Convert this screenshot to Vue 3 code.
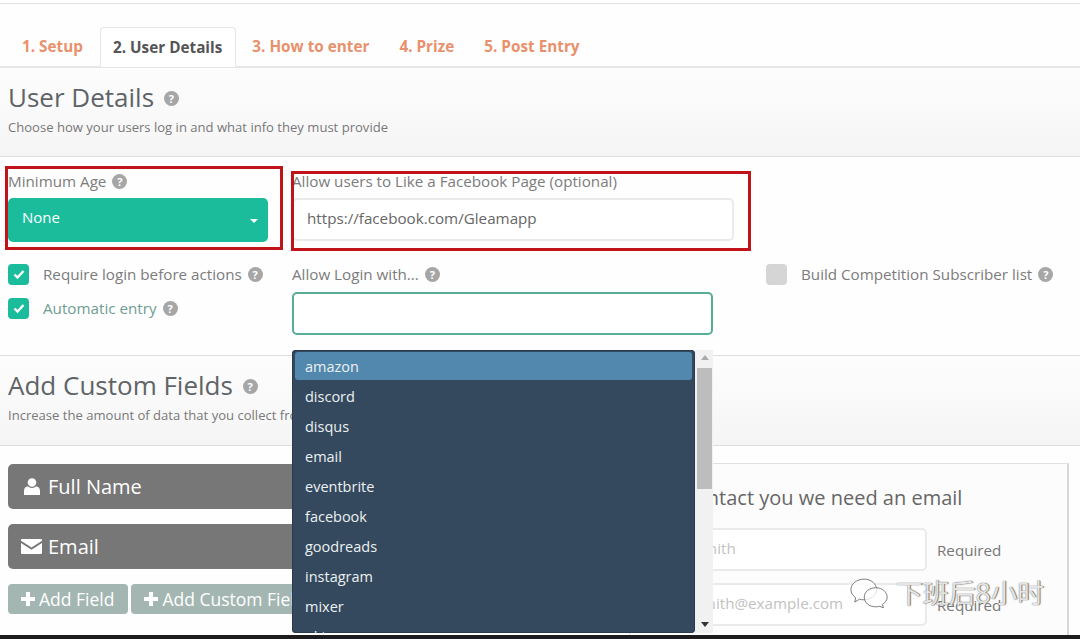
<script setup>
const tabs = [
  { label: '1. Setup', active: false },
  { label: '2. User Details', active: true },
  { label: '3. How to enter', active: false },
  { label: '4. Prize', active: false },
  { label: '5. Post Entry', active: false },
]

const logins = ['amazon', 'discord', 'disqus', 'email', 'eventbrite', 'facebook', 'goodreads', 'instagram', 'mixer', 'okta']
</script>

<template>
  <div class="page">
    <div class="top-line"></div>

    <ul class="tabs">
      <li v-for="tab in tabs" :key="tab.label" class="tab" :class="{ active: tab.active }">{{ tab.label }}</li>
    </ul>

    <header class="band band-first">
      <h2>User Details <span class="help help-big">?</span></h2>
      <p>Choose how your users log in and what info they must provide</p>
    </header>

    <section class="form">
      <div class="col col-age">
        <label class="label">Minimum Age <span class="help">?</span></label>
        <div class="select">
          <span>None</span>
          <i class="caret"></i>
        </div>
        <div class="check first-check">
          <span class="box on">
            <svg viewBox="0 0 20 20" width="20" height="20"><path d="M5.5 10.5l3 3 6-6.5" fill="none" stroke="#fff" stroke-width="2.4" /></svg>
          </span>
          Require login before actions <span class="help">?</span>
        </div>
        <div class="check">
          <span class="box on">
            <svg viewBox="0 0 20 20" width="20" height="20"><path d="M5.5 10.5l3 3 6-6.5" fill="none" stroke="#fff" stroke-width="2.4" /></svg>
          </span>
          <span class="teal-text">Automatic entry</span> <span class="help">?</span>
        </div>
      </div>

      <div class="col col-login">
        <label class="label">Allow users to Like a Facebook Page (optional)</label>
        <div class="input fb">https://facebook.com/Gleamapp</div>
        <label class="label login-label">Allow Login with... <span class="help">?</span></label>
        <div class="input focus"></div>
      </div>

      <div class="col col-list">
        <div class="check">
          <span class="box"></span>
          Build Competition Subscriber list <span class="help">?</span>
        </div>
      </div>
    </section>

    <header class="band band-second">
      <h2>Add Custom Fields <span class="help help-big">?</span></h2>
      <p>Increase the amount of data that you collect from your users</p>
    </header>

    <section class="fields">
      <div class="fields-left">
        <div class="field-bar">
          <span class="bar-icon">
            <svg viewBox="0 0 16 17" width="16" height="17">
              <circle cx="8" cy="4.500" r="4.300" fill="#fff" />
              <path d="M0 17v-4c0-2.800 1.600-4.500 3.800-4.500 1.100.9 2.600 1.400 4.200 1.400s3.100-.5 4.200-1.400c2.200 0 3.800 1.700 3.800 4.500v4z" fill="#fff" />
            </svg>
          </span>
          Full Name
        </div>
        <div class="field-bar">
          <span class="bar-icon">
            <svg viewBox="0 0 21 15" width="21" height="15">
              <path d="M1 0h19a1 1 0 0 1 1 1v.8L10.500 8.500 0 1.800V1a1 1 0 0 1 1-1z" fill="#fff" />
              <path d="M0 4l10.500 6.700L21 4v10a1 1 0 0 1-1 1H1a1 1 0 0 1-1-1z" fill="#fff" />
            </svg>
          </span>
          Email
        </div>
        <div class="add-row">
          <button class="add">
            <svg viewBox="0 0 14 14" width="14" height="14"><path d="M5 0h4v5h5v4H9v5H5V9H0V5h5z" fill="#fff" /></svg>
            Add Field
          </button>
          <button class="add">
            <svg viewBox="0 0 14 14" width="14" height="14"><path d="M5 0h4v5h5v4H9v5H5V9H0V5h5z" fill="#fff" /></svg>
            Add Custom Field
          </button>
        </div>
      </div>

      <div class="card">
        <h3>To contact you we need an email</h3>
        <div class="card-row">
          <div class="card-input">John Smith</div>
          <span>Required</span>
        </div>
        <div class="card-row">
          <div class="card-input">john.smith@example.com</div>
          <span>Required</span>
        </div>
      </div>
    </section>

    <div class="bottom-bar"></div>

    <!-- overlays -->
    <div class="red red-age"></div>
    <div class="red red-fb"></div>

    <div class="dropdown">
      <ul class="options">
        <li v-for="(name, i) in logins" :key="name" :class="{ hover: i === 0 }">{{ name }}</li>
      </ul>
      <div class="scrollbar">
        <i class="arrow up"></i>
        <div class="thumb"></div>
        <i class="arrow down"></i>
      </div>
    </div>

    <div class="watermark">
      <svg viewBox="0 0 44 32" width="42" height="31">
        <g fill="rgba(255,255,255,.75)" stroke="#777" stroke-width="1">
          <path d="M16 2C8 2 2 7 2 13c0 3.500 2 6.500 5 8.500L6 26l5-3c1.500.4 3 .6 4.500.6C22 23.600 29 19 29 13 29 7 23 2 16 2z" />
          <path d="M28 11c-7 0-12 4.500-12 10s5 10 12 10c1.500 0 2.800-.2 4-.6l4 1.600-1-3.500c3-2 5-4.500 5-7.500 0-5.500-5-10-12-10z" />
        </g>
      </svg>
      <span class="wm-text">下班后8小时</span>
    </div>
  </div>
</template>

<style>
html,
body {
  margin: 0;
  background: #fff;
  overflow: hidden;
}
</style>

<style scoped>
.page {
  position: relative;
  width: 1080px;
  height: 639px;
  overflow: hidden;
  background: #fefefe;
  font-family: "Open Sans", "Noto Sans CJK SC", sans-serif;
  color: #7c7c7c;
}

.top-line {
  height: 3px;
  border-bottom: 1px solid #e2e2e2;
}

.tabs {
  display: flex;
  height: 39px;
  margin: 0;
  padding: 23px 0 0 8px;
  list-style: none;
  border-bottom: 2px solid #e6e6e6;
}

.tab {
  padding: 0 14px;
  margin-right: 2px;
  font-size: 15.3px;
  font-weight: 700;
  line-height: 39px;
  color: #e8916c;
  white-space: nowrap;
}

.tab.active {
  height: 40px;
  margin-left: 1px;
  padding: 0 13px 0 12px;
  color: #555;
  background: #fff;
  border: 1px solid #e6e6e6;
  border-bottom: 0;
  border-radius: 4px 4px 0 0;
  box-sizing: border-box;
}

.band {
  box-sizing: border-box;
  padding: 12px 8px 0;
  background: linear-gradient(#fdfdfd, #f5f5f5);
  border-bottom: 1px solid #dedede;
}

.band-first {
  height: 89px;
}

.band-second {
  height: 90px;
}

.band h2 {
  margin: 0;
  font-size: 26px;
  font-weight: 400;
  line-height: 34px;
  color: #5f6468;
}

.band p {
  margin: 4px 0 0;
  font-size: 13.07px;
  line-height: 18px;
  color: #787878;
}

.help {
  display: inline-block;
  width: 15px;
  height: 15px;
  margin-left: 2px;
  border-radius: 50%;
  background: #a6a6a6;
  color: #fff;
  font-size: 11px;
  font-weight: 700;
  line-height: 15px;
  text-align: center;
  vertical-align: 1px;
}

.help-big {
  vertical-align: 4px;
  margin-left: 3px;
}

.form {
  display: flex;
  height: 199px;
  box-sizing: border-box;
  padding: 15px 0 0 8px;
  border-bottom: 1px solid #dedede;
}

.col {
  font-size: 15.2px;
}

.col-age {
  width: 284px;
}

.col-login {
  width: 474px;
}

.col-list {
  padding-top: 91px;
}

.label {
  display: block;
  height: 19px;
  line-height: 19px;
  white-space: nowrap;
}

.select {
  display: flex;
  align-items: center;
  justify-content: space-between;
  box-sizing: border-box;
  width: 260px;
  height: 44px;
  margin-top: 7px;
  padding: 0 10px 6px 14px;
  border-radius: 5px;
  background: #1abc9c;
  color: #fff;
  font-size: 15px;
}

.caret {
  width: 0;
  height: 0;
  margin-top: 7px;
  border: 4px solid transparent;
  border-top: 4px solid #fff;
  border-bottom: 0;
}

.check {
  display: flex;
  align-items: center;
  gap: 4px;
  height: 22px;
  margin-bottom: 12px;
  white-space: nowrap;
}

.first-check {
  margin-top: 21px;
}

.box {
  flex: none;
  width: 21px;
  height: 21px;
  margin-right: 10px;
  border-radius: 4px;
  background: #d5d5d5;
}

.box.on {
  background: #1abc9c;
}

.box svg {
  display: block;
  margin: 0 auto;
}

.teal-text {
  color: #6f9d92;
}

.input {
  box-sizing: border-box;
  background: #fff;
  border: 2px solid #eaeaea;
  border-radius: 5px;
}

.fb {
  width: 442px;
  height: 43px;
  margin-top: 7px;
  padding-left: 13px;
  line-height: 37px;
  color: #666;
}

.login-label {
  margin-top: 24px;
}

.focus {
  width: 421px;
  height: 43px;
  margin-top: 8px;
  border-color: #58ad96;
}

.fields {
  display: flex;
  justify-content: space-between;
  height: 189px;
  box-sizing: border-box;
  padding: 18px 11px 0 8px;
}

.fields-left {
  width: 600px;
}

.field-bar {
  display: flex;
  align-items: center;
  gap: 6px;
  box-sizing: border-box;
  height: 45px;
  margin-bottom: 15px;
  padding-left: 13px;
  border-radius: 5px;
  background: #777;
  color: #fff;
  font-size: 20px;
}

.bar-icon {
  display: flex;
  justify-content: center;
  width: 21px;
}

.add-row {
  display: flex;
  gap: 3px;
}

.add {
  display: flex;
  align-items: center;
  gap: 4px;
  height: 30px;
  padding: 0 14px 0 13px;
  border: 0;
  border-radius: 4px;
  background: #a3b6b1;
  color: #fff;
  font-family: inherit;
  font-size: 17.5px;
  white-space: nowrap;
}

.card {
  box-sizing: border-box;
  width: 440px;
  height: 181px;
  margin-top: -1px;
  padding: 21px 0 0 20px;
  border: 1px solid #e0e0e0;
  border-right: 2px solid #d8d8d8;
  border-bottom: 0;
  background: #fcfcfc;
}

.card h3 {
  margin: 0 0 17px 7px;
  font-size: 20px;
  font-weight: 400;
  line-height: 26px;
  color: #666;
  white-space: nowrap;
}

.card-row {
  display: flex;
  align-items: center;
  gap: 10px;
  margin-bottom: 12px;
  font-size: 15.2px;
  color: #777;
}

.card-input {
  box-sizing: border-box;
  width: 277px;
  height: 43px;
  padding-left: 7px;
  background: #fff;
  border: 2px solid #eaeaea;
  border-radius: 5px;
  color: #c2c2c2;
  line-height: 37px;
  white-space: nowrap;
  overflow: hidden;
}

.bottom-bar {
  position: absolute;
  left: 0;
  right: 0;
  bottom: 0;
  height: 4px;
  background: #1c1c1c;
}

.red {
  position: absolute;
  box-sizing: border-box;
  border: 3px solid #c0141a;
  pointer-events: none;
}

.red-age {
  left: 5px;
  top: 166px;
  width: 278px;
  height: 84px;
}

.red-fb {
  left: 291px;
  top: 171px;
  width: 460px;
  height: 80px;
}

.dropdown {
  position: absolute;
  left: 292px;
  top: 350px;
  display: flex;
  width: 421px;
  height: 283px;
}

.options {
  flex: none;
  box-sizing: border-box;
  width: 403px;
  height: 283px;
  margin: 0;
  padding: 2px 3px;
  overflow: hidden;
  list-style: none;
  background: #34495e;
  box-shadow: inset 0 0 0 1px #2a3b4d;
  border-radius: 4px;
  color: #ecf0f1;
  font-size: 14.5px;
}

.options li {
  height: 30px;
  padding-left: 10px;
  line-height: 30px;
}

.options li.hover {
  height: 28px;
  margin-bottom: 2px;
  border-radius: 3px;
  background: #5288ad;
}

.scrollbar {
  position: relative;
  flex: 1;
  background: #f1f1f1;
}

.thumb {
  position: absolute;
  top: 18px;
  left: 2px;
  width: 15px;
  height: 121px;
  background: #bdbdbd;
}

.arrow {
  position: absolute;
  left: 6px;
  width: 0;
  height: 0;
  border: 4px solid transparent;
}

.arrow.up {
  top: 5px;
  border-top: 0;
  border-bottom: 5px solid #aaa;
}

.arrow.down {
  bottom: 6px;
  border-bottom: 0;
  border-top: 5px solid #333;
}

.watermark {
  position: absolute;
  left: 849px;
  top: 577px;
  display: flex;
  align-items: center;
  gap: 5px;
  pointer-events: none;
}

.wm-text {
  font-size: 26.5px;
  line-height: 30px;
  color: rgba(255, 255, 255, 0.85);
  text-shadow: 0 0 1px #555, 1px 0 1px #777;
  white-space: nowrap;
}
</style>
